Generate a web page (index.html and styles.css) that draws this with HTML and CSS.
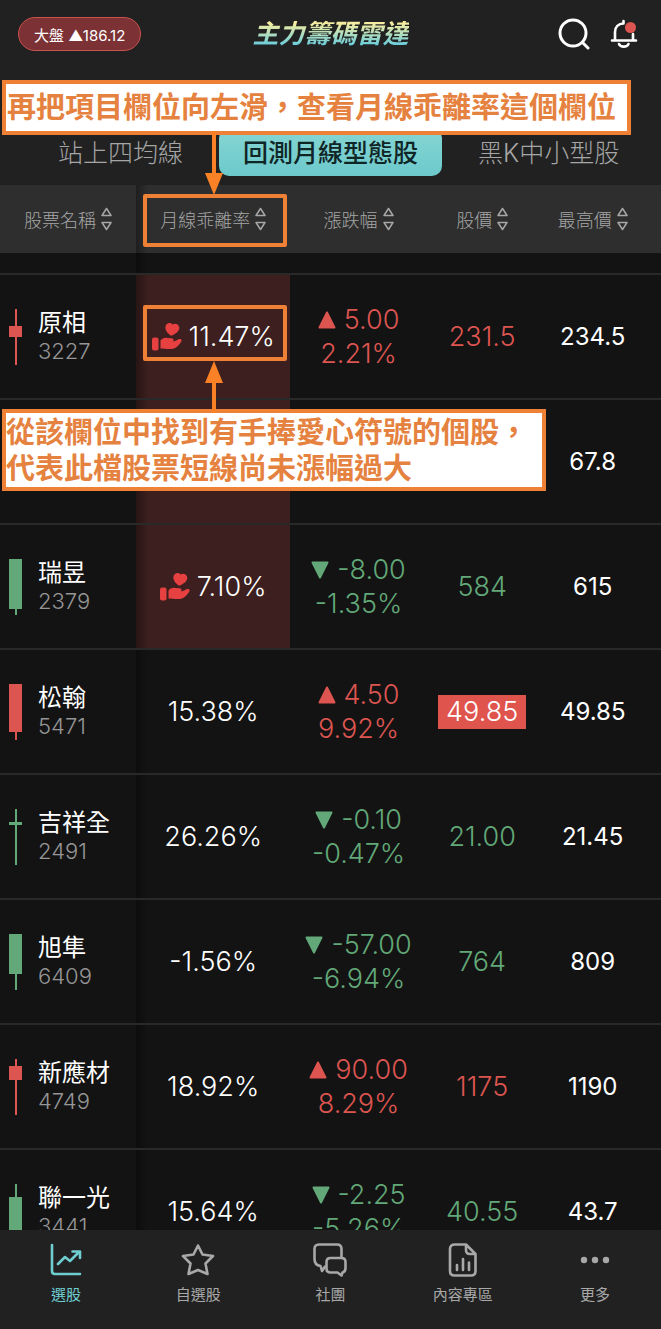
FILE: index.html
```html
<!DOCTYPE html>
<html lang="zh-Hant">
<head>
    <meta charset="UTF-8">
    <meta name="viewport" content="width=device-width, initial-scale=1.0">
    <title>主力籌碼雷達</title>
    <link rel="stylesheet" href="styles.css">
</head>
<body>
    <svg width="0" height="0" class="symbols">
        <symbol id="sort" viewBox="0 0 11 24">
            <path d="M5.5 1.5 L10 8.5 H1 Z M5.5 22.5 L10 15.5 H1 Z" fill="none" stroke="currentColor" stroke-width="1.5" stroke-linejoin="round"/>
        </symbol>
        <symbol id="up" viewBox="0 0 18 18">
            <path d="M9 1.5 L16.5 16.5 H1.5 Z" fill="currentColor" stroke="currentColor" stroke-width="2" stroke-linejoin="round"/>
        </symbol>
        <symbol id="down" viewBox="0 0 18 18">
            <path d="M9 16.5 L16.5 1.5 H1.5 Z" fill="currentColor" stroke="currentColor" stroke-width="2" stroke-linejoin="round"/>
        </symbol>
        <symbol id="care" viewBox="0 0 30 29">
            <rect x="0" y="15.5" width="6.5" height="13" rx="2"/>
            <path d="M8.5 18.5 C10.5 15.8 13 15.2 15.5 16 L19.5 16.2 C21.6 16.3 22 18 21 19.6 C23.5 19.4 25 17.8 26.8 17.1 C29 16.4 30.4 18 29.2 19.8 C27 23.2 24 26.6 19.5 27 C15.5 27.4 12 26.4 8.5 26.4 Z"/>
            <path d="M19 13.8 C16 11.5 13 8.6 13.4 4.8 C13.8 1 18.4 -.4 20.6 2.5 C23.6 .4 27.6 2.6 27.3 6.2 C27 9.6 23.2 12 19 13.8 Z"/>
        </symbol>
    </svg>

    <div class="app">
        <header class="top">
            <button class="market" type="button">大盤 ▲186.12</button>
            <h1 class="title">主力籌碼雷達</h1>
            <div class="tools">
                <button type="button" aria-label="搜尋">
                    <svg width="32" height="32" viewBox="0 0 32 32" fill="none" stroke="currentColor" stroke-width="3" stroke-linecap="round">
                        <circle cx="15" cy="15" r="13"/>
                        <path d="M24.5 24.5 L30 30"/>
                    </svg>
                </button>
                <button type="button" aria-label="通知">
                    <svg width="28" height="32" viewBox="0 0 28 32" fill="none" stroke="currentColor" stroke-width="2.6" stroke-linecap="round" stroke-linejoin="round">
                        <path d="M5 22 V14 C5 9 8.5 5.8 13.5 5.5 V3 M23 16 V22 M2 22.5 H26"/>
                        <path d="M9 26 C10.5 29.500 17 29.500 18.500 26"/>
                        <circle cx="20.500" cy="9.500" r="5.500" fill="#dd5550" stroke="none"/>
                    </svg>
                </button>
            </div>
        </header>

        <div class="tabs">
            <button class="tab" type="button">站上四均線</button>
            <button class="tab active" type="button">回測月線型態股</button>
            <button class="tab" type="button">黑K中小型股</button>
        </div>

        <div class="list">
            <table>
                <colgroup>
                    <col class="c-name"><col class="c-rate"><col class="c-change"><col class="c-price"><col class="c-high">
                </colgroup>
                <thead>
                    <tr>
                        <th><button type="button">股票名稱<svg class="sort"><use href="#sort"/></svg></button></th>
                        <th class="rate">
                            <button type="button">月線乖離率<svg class="sort"><use href="#sort"/></svg></button>
                            <span class="frame"></span>
                        </th>
                        <th><button type="button">漲跌幅<svg class="sort"><use href="#sort"/></svg></button></th>
                        <th><button type="button">股價<svg class="sort"><use href="#sort"/></svg></button></th>
                        <th class="high"><button type="button">最高價<svg class="sort"><use href="#sort"/></svg></button></th>
                    </tr>
                </thead>
                <tbody>
                    <tr class="spacer"><td></td><td class="rate"></td><td></td><td></td><td></td></tr>
                    <tr>
                        <td>
                            <div class="stock">
                                <svg class="candle red"><rect x="6" y="0" width="2" height="56"/><rect y="17" width="13" height="11"/></svg>
                                <div><div class="name">原相</div><div class="code">3227</div></div>
                            </div>
                        </td>
                        <td class="rate hot">
                            <svg class="care"><use href="#care"/></svg>11.47%
                            <span class="frame"></span>
                        </td>
                        <td class="red"><svg class="tri"><use href="#up"/></svg>5.00<br>2.21%</td>
                        <td class="red">231.5</td>
                        <td class="high">234.5</td>
                    </tr>
                    <tr>
                        <td></td>
                        <td class="rate hot"></td>
                        <td></td>
                        <td></td>
                        <td class="high">67.8</td>
                    </tr>
                    <tr>
                        <td>
                            <div class="stock">
                                <svg class="candle green"><rect x="6" y="0" width="2" height="56"/><rect y="0" width="13" height="50"/></svg>
                                <div><div class="name">瑞昱</div><div class="code">2379</div></div>
                            </div>
                        </td>
                        <td class="rate hot"><svg class="care"><use href="#care"/></svg>7.10%</td>
                        <td class="green"><svg class="tri"><use href="#down"/></svg>-8.00<br>-1.35%</td>
                        <td class="green">584</td>
                        <td class="high">615</td>
                    </tr>
                    <tr>
                        <td>
                            <div class="stock">
                                <svg class="candle red"><rect x="6" y="0" width="2" height="56"/><rect y="0" width="13" height="48"/></svg>
                                <div><div class="name">松翰</div><div class="code">5471</div></div>
                            </div>
                        </td>
                        <td class="rate">15.38%</td>
                        <td class="red"><svg class="tri"><use href="#up"/></svg>4.50<br>9.92%</td>
                        <td><span class="limit">49.85</span></td>
                        <td class="high">49.85</td>
                    </tr>
                    <tr>
                        <td>
                            <div class="stock">
                                <svg class="candle green"><rect x="6" y="0" width="2" height="56"/><rect y="13" width="13" height="3"/></svg>
                                <div><div class="name">吉祥全</div><div class="code">2491</div></div>
                            </div>
                        </td>
                        <td class="rate">26.26%</td>
                        <td class="green"><svg class="tri"><use href="#down"/></svg>-0.10<br>-0.47%</td>
                        <td class="green">21.00</td>
                        <td class="high">21.45</td>
                    </tr>
                    <tr>
                        <td>
                            <div class="stock">
                                <svg class="candle green"><rect x="6" y="0" width="2" height="56"/><rect y="0" width="13" height="40"/></svg>
                                <div><div class="name">旭隼</div><div class="code">6409</div></div>
                            </div>
                        </td>
                        <td class="rate">-1.56%</td>
                        <td class="green"><svg class="tri"><use href="#down"/></svg>-57.00<br>-6.94%</td>
                        <td class="green">764</td>
                        <td class="high">809</td>
                    </tr>
                    <tr>
                        <td>
                            <div class="stock">
                                <svg class="candle red"><rect x="6" y="0" width="2" height="56"/><rect y="7" width="13" height="14"/></svg>
                                <div><div class="name">新應材</div><div class="code">4749</div></div>
                            </div>
                        </td>
                        <td class="rate">18.92%</td>
                        <td class="red"><svg class="tri"><use href="#up"/></svg>90.00<br>8.29%</td>
                        <td class="red">1175</td>
                        <td class="high">1190</td>
                    </tr>
                    <tr>
                        <td>
                            <div class="stock">
                                <svg class="candle green"><rect x="6" y="0" width="2" height="56"/><rect y="13" width="13" height="43"/></svg>
                                <div><div class="name">聯一光</div><div class="code">3441</div></div>
                            </div>
                        </td>
                        <td class="rate">15.64%</td>
                        <td class="green"><svg class="tri"><use href="#down"/></svg>-2.25<br>-5.26%</td>
                        <td class="green">40.55</td>
                        <td class="high">43.7</td>
                    </tr>
                </tbody>
            </table>
        </div>

        <nav class="nav">
            <a href="#" class="on">
                <svg viewBox="0 0 34 34"><path d="M3 2 V28 Q3 31 6 31 H31 M9 21 L16 14 L21 18 L30 9 M23.500 8.500 H31 V15"/></svg>
                選股
            </a>
            <a href="#">
                <svg viewBox="0 0 34 34"><path d="M17 2.500 L21.500 11.500 L32 13 L24.500 20.500 L26.500 31 L17 27 L7.500 31 L9.500 20.500 L2 13 L12.500 11.500 Z"/></svg>
                自選股
            </a>
            <a href="#">
                <svg viewBox="0 0 34 34"><path d="M12 23.5 L9 28 L7.500 23 C4 22.500 1.500 20 1.500 16 V6 Q1.500 1.500 6 1.500 H24 Q28.500 1.500 28.500 6 V14"/><path d="M17.500 15 H28.500 Q32.500 15 32.500 19 V25 Q32.500 29 29.500 29.500 L28.500 32.500 L24.500 29.500 H17.500 Q13.500 29.500 13.500 25.500 V19 Q13.500 15 17.500 15 Z"/></svg>
                社團
            </a>
            <a href="#">
                <svg viewBox="0 0 34 34"><path d="M20 1.500 H9 Q4 1.500 4 6 V28 Q4 32.500 8.500 32.500 H25 Q29.500 32.500 29.500 28 V11 Z M20 1.500 V7 Q20 11 24 11 H29.500 M11 22 V27 M17 16 V27 M23 19.500 V27"/></svg>
                內容專區
            </a>
            <a href="#">
                <svg viewBox="0 0 34 34"><g fill="currentColor" stroke="none"><circle cx="6" cy="17" r="3.200"/><circle cx="17" cy="17" r="3.200"/><circle cx="28" cy="17" r="3.200"/></g></svg>
                更多
            </a>
        </nav>

        <!-- 教學標註 -->
        <div class="note note-top">再把項目欄位向左滑，查看月線乖離率這個欄位
            <svg class="arrow arrow-down" viewBox="0 0 20 64"><path d="M8 0 H12 V42 H19 L10 64 L1 42 H8 Z"/></svg>
        </div>
        <div class="note note-row">從該欄位中找到有手捧愛心符號的個股，<br>代表此檔股票短線尚未漲幅過大
            <svg class="arrow arrow-up" viewBox="0 0 20 52"><path d="M8 52 V22 H1 L10 0 L19 22 H12 V52 Z"/></svg>
        </div>
    </div>
</body>
</html>
```
FILE: styles.css
```css
*{
    box-sizing: border-box;
}
body{
    margin: 0;
    background-color: #212121;
    color: #fff;
    font-family: Inter, "Noto Sans CJK TC", sans-serif;
}
button{
    margin: 0;
    padding: 0;
    border: 0;
    background: none;
    color: inherit;
    font: inherit;
    cursor: pointer;
}
svg{
    flex-shrink: 0;
}
.symbols{
    position: absolute;
}
.app{
    position: relative;
    display: flex;
    flex-direction: column;
    height: 100vh;
    overflow: hidden;
}

/* header */
.top{
    display: grid;
    grid-template-columns: 1fr auto 1fr;
    align-items: center;
    height: 68px;
    padding: 0 18px;
}
.market{
    justify-self: start;
    height: 34px;
    padding: 0 15px;
    border: 1px solid #c9524e;
    border-radius: 17px;
    background-color: #7c3134;
    font-size: 15px;
}
.title{
    margin: 0;
    font-size: 26px;
    line-height: 36px;
    font-style: italic;
    font-weight: bold;
    background: linear-gradient(#f6eda0 20%, #5fcbe0 85%);
    -webkit-background-clip: text;
    background-clip: text;
    color: transparent;
}
.tools{
    justify-self: end;
    display: flex;
    gap: 20px;
    padding-right: 5px;
}
.tools svg{
    display: block;
}

/* tabs */
.tabs{
    display: flex;
    gap: 12px;
    padding: 60px 0 9px 34px;
    white-space: nowrap;
}
.tab{
    height: 48px;
    padding: 0 24px 2px;
    border-radius: 10px;
    color: #a6a6a6;
    font-size: 25px;
    font-weight: 300;
}
.tab.active{
    background: linear-gradient(#86d6d3, #6cc9cb);
    color: #102526;
    font-weight: 500;
}

/* stock table */
.list{
    flex: 1;
    min-height: 0;
    overflow: hidden;
    background-color: #131313;
}
table{
    width: 100%;
    table-layout: fixed;
    border-spacing: 0;
}
.c-name{
    width: 20.6%;
}
.c-rate{
    width: 23.3%;
}
.c-change{
    width: 20.7%;
}
.c-price{
    width: 16.7%;
}
th{
    height: 68px;
    padding: 0;
    background-color: #2e2e2e;
    color: #a6a6a6;
    font-size: 18px;
    font-weight: 300;
}
th button{
    display: inline-flex;
    align-items: center;
    gap: 5px;
    white-space: nowrap;
}
.sort{
    width: 11px;
    height: 24px;
}
td{
    height: 125px;
    padding: 0;
    border-top: 2px solid #292929;
    font-size: 27px;
    font-weight: 300;
    line-height: 34px;
    text-align: center;
    white-space: nowrap;
}
.spacer td{
    height: 20px;
    border: 0;
    line-height: 0;
}
.rate{
    position: relative;
    background-image: linear-gradient(to right, rgba(0,0,0,.35), transparent 12px);
}
.hot{
    background-color: #3c1f1e;
}
th.high, td.high{
    padding-right: 13px;
}
td.high{
    font-size: 24px;
    font-weight: 400;
}
.red{
    color: #dd5550;
}
.green{
    color: #62a878;
}
.limit{
    display: inline-block;
    padding: 0 8px;
    background-color: #e0544e;
}
.tri{
    width: 18px;
    height: 18px;
    margin-right: 8px;
}
.care{
    width: 30px;
    height: 29px;
    margin-right: 7px;
    fill: #e64040;
    vertical-align: -5px;
}
.stock{
    display: flex;
    align-items: center;
    gap: 16px;
    padding-left: 9px;
    text-align: left;
}
.candle{
    width: 13px;
    height: 56px;
    fill: currentColor;
}
.name{
    font-size: 24px;
    font-weight: 400;
    line-height: 28px;
}
.code{
    color: #969696;
    font-size: 22px;
    line-height: 28px;
}

/* bottom nav */
.nav{
    display: grid;
    grid-template-columns: repeat(5, 1fr);
    height: 99px;
    background-color: #212121;
}
.nav a{
    display: flex;
    flex-direction: column;
    align-items: center;
    gap: 7px;
    padding-top: 13px;
    color: #a8a8a8;
    font-size: 15px;
    line-height: 22px;
    text-decoration: none;
}
.nav .on{
    color: #6fcdd0;
}
.nav svg{
    width: 34px;
    height: 34px;
    fill: none;
    stroke: currentColor;
    stroke-width: 2.6;
    stroke-linecap: round;
    stroke-linejoin: round;
}

/* notes on top of the screen */
.note{
    position: absolute;
    left: 2px;
    border: 4px solid #ee8136;
    background-color: #fff;
    color: #e58240;
    font-size: 29px;
    font-weight: bold;
    line-height: 36px;
    white-space: nowrap;
}
.note-top{
    top: 80px;
    padding: 6px 11px 5px 1px;
}
.note-row{
    top: 409px;
    padding: 2px 14px 0 0;
}
.arrow{
    position: absolute;
    left: 198px;
    width: 20px;
    fill: #fb8127;
}
.arrow-down{
    top: 100%;
    height: 64px;
}
.arrow-up{
    bottom: 100%;
    height: 52px;
}
.frame{
    position: absolute;
    left: 7px;
    right: 3px;
    top: 9px;
    bottom: 6px;
    border: 4px solid #ee8136;
    border-radius: 2px;
}
td .frame{
    top: 30px;
    bottom: 37px;
}
```
